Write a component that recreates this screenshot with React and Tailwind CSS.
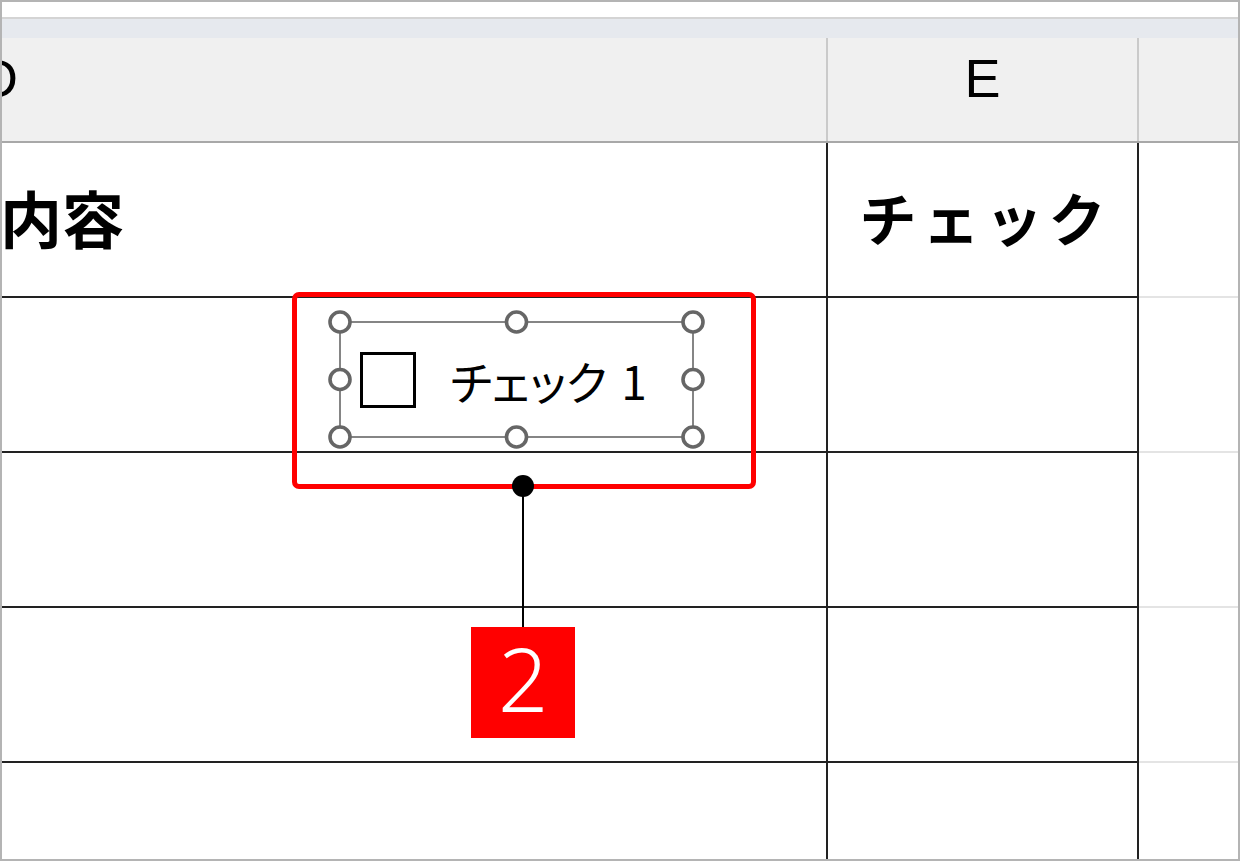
import React from "react";

const JP = { fontFamily: '"Noto Sans CJK JP", "Noto Sans", sans-serif' };
const SANS = { fontFamily: '"Liberation Sans", Arial, sans-serif' };

const BodyRow = ({ children, last }) => (
  <div
    className={`grid grid-cols-[824px_313px_1fr] ${last ? "flex-1" : "h-[155px]"}`}
  >
    <div
      className={`flex items-center overflow-hidden ${last ? "" : "border-b-2 border-[#222]"}`}
    >
      {children?.[0]}
    </div>
    <div
      className={`flex items-center justify-center border-x-2 border-[#222] ${last ? "" : "border-b-2 border-b-[#222]"}`}
    >
      {children?.[1]}
    </div>
    <div className={last ? "" : "border-b-2 border-[#e4e4e4]"} />
  </div>
);

const SelectionFrame = () => {
  const xs = [20, 196.5, 373];
  const ys = [20, 77.5, 135];
  const handles = [];
  ys.forEach((y, yi) =>
    xs.forEach((x, xi) => {
      if (yi === 1 && xi === 1) return;
      handles.push(
        <circle
          key={`${xi}-${yi}`}
          cx={x}
          cy={y}
          r="10"
          fill="white"
          stroke="#666"
          strokeWidth="3.6"
        />
      );
    })
  );
  return (
    <svg
      className="absolute left-[320px] top-[302px]"
      width="394"
      height="156"
      viewBox="0 0 394 156"
    >
      <rect
        x="20"
        y="20"
        width="353"
        height="115"
        fill="none"
        stroke="#858585"
        strokeWidth="2"
      />
      {handles}
    </svg>
  );
};

export default function App() {
  return (
    <div className="relative w-[1240px] h-[861px] bg-white">
      <div className="w-full h-full border-2 border-[#b4b4b4] flex flex-col overflow-hidden">
        <div className="h-[17px] shrink-0 bg-white border-b-2 border-[#d4d4d4]" />
        <div className="h-[19px] shrink-0 bg-[#e6e9ee]" />
        {/* column header */}
        <div className="h-[105px] shrink-0 grid grid-cols-[824px_313px_1fr] bg-[#f0f0f0] border-b-2 border-[#a8a8a8]">
          <div className="flex items-center overflow-hidden">
            <span
              className="text-[54px] leading-none text-black -ml-[23px] -mt-[24px]"
              style={SANS}
            >
              D
            </span>
          </div>
          <div className="flex items-center justify-center border-x-2 border-[#cacaca]">
            <span
              className="text-[54px] leading-none text-black -mt-[24px]"
              style={SANS}
            >
              E
            </span>
          </div>
          <div />
        </div>
        {/* body rows */}
        <BodyRow>
          <span
            className="text-[62px] font-bold leading-none text-black -ml-[2px] -mt-[6px]"
            style={JP}
          >
            内容
          </span>
          <span
            className="text-[57px] font-bold leading-none text-black tracking-[6px] -mt-[6px] pl-[6px]"
            style={JP}
          >
            チェック
          </span>
        </BodyRow>
        <BodyRow />
        <BodyRow />
        <BodyRow />
        <BodyRow last />
      </div>

      {/* form control checkbox with selection handles */}
      <SelectionFrame />
      <div className="absolute left-[360px] top-[352px] flex items-center gap-[34px]">
        <div className="w-[56px] h-[56px] border-[3px] border-black bg-white" />
        <span
          className="text-[46px] leading-none text-black"
          style={{ ...JP, fontFeatureSettings: '"palt"' }}
        >
          チェック<span className="ml-[14px]">1</span>
        </span>
      </div>

      {/* callout */}
      <div className="absolute left-[292px] top-[292px] w-[464px] h-[197px] border-[5px] border-[#ff0000] rounded-[7px]" />
      <div className="absolute left-[522px] top-[485px] w-[2px] h-[142px] bg-black" />
      <div className="absolute left-[512px] top-[475px] w-[22px] h-[22px] rounded-full bg-black" />
      <div className="absolute left-[471px] top-[627px] w-[104px] h-[111px] bg-[#ff0000] flex items-center justify-center">
        <span
          className="text-[88px] font-light leading-none text-white -mt-[10px]"
          style={{ fontFamily: '"Noto Sans", "Open Sans", sans-serif' }}
        >
          2
        </span>
      </div>
    </div>
  );
}
